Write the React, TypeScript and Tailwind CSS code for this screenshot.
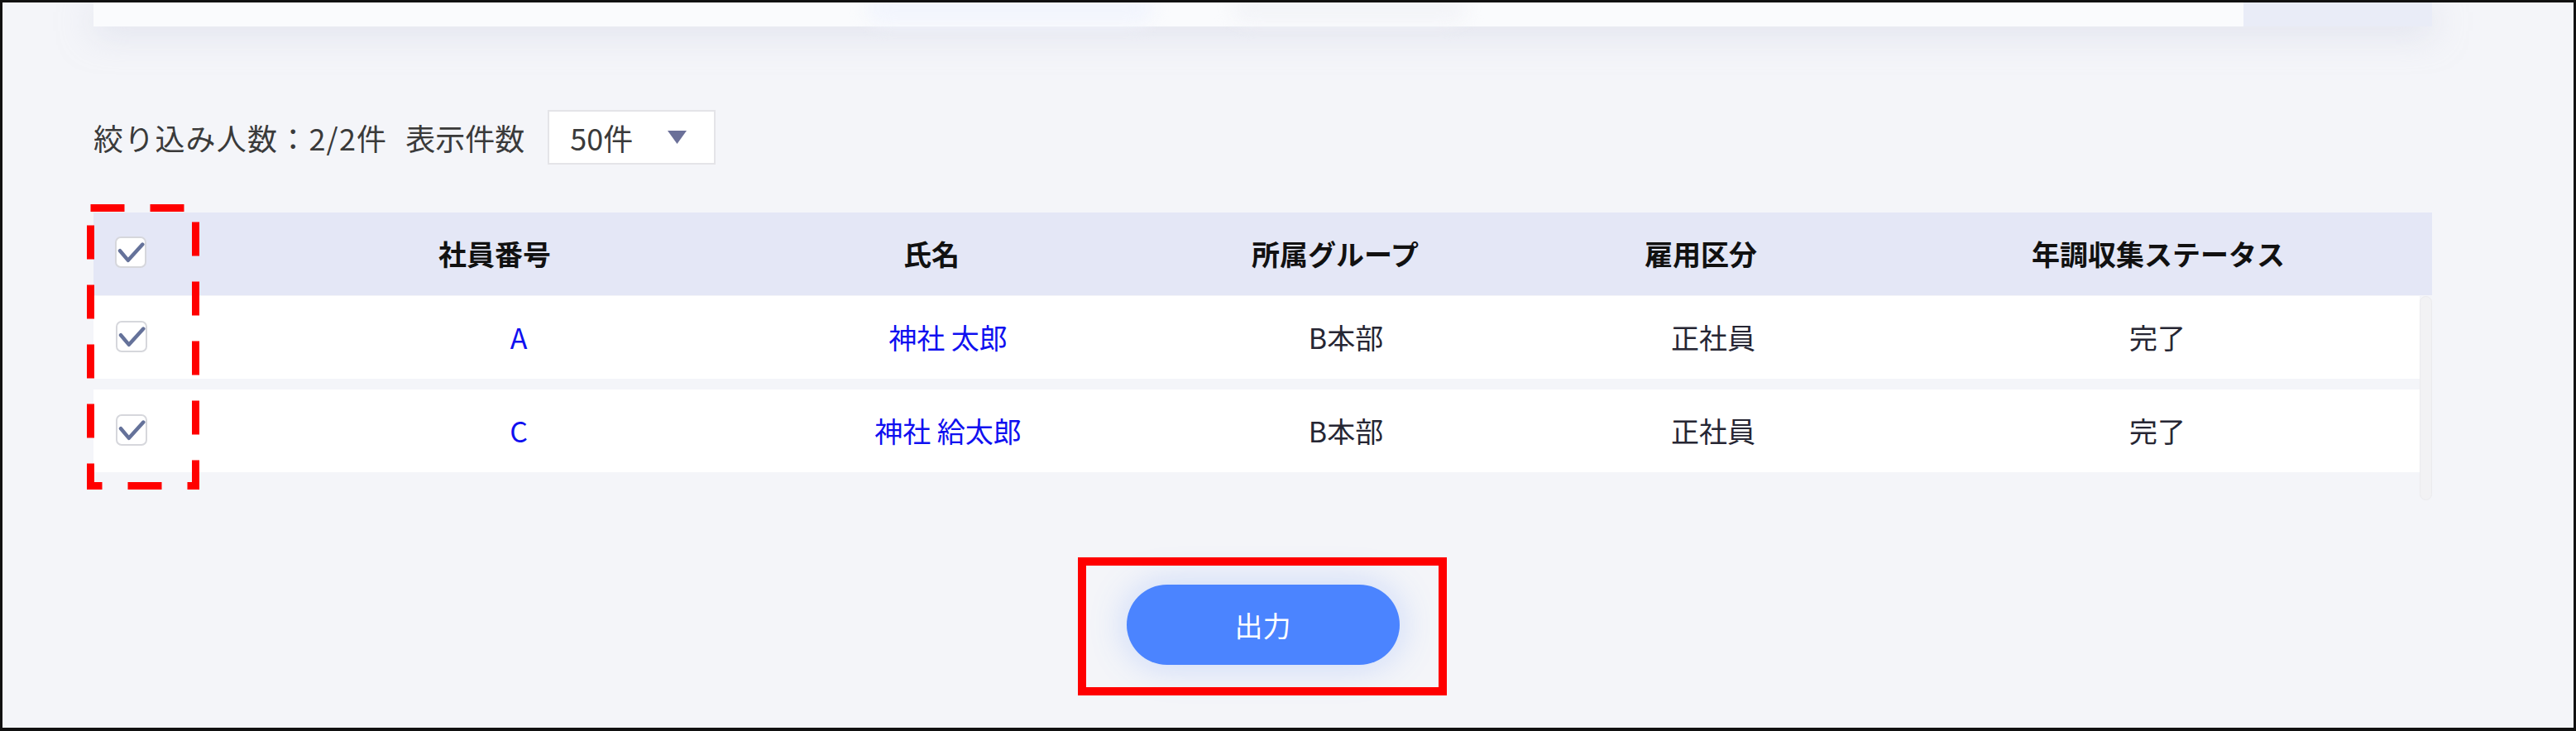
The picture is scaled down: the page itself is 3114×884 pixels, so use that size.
import React from "react";

function Check({ className = "" }: { className?: string }) {
  return (
    <div
      className={
        "w-[38px] h-[38px] rounded-[7px] border-2 border-[#d6d7dc] bg-white flex items-center justify-center " +
        className
      }
    >
      <svg width="38" height="38" viewBox="0 0 38 38" className="block">
        <polyline
          points="4.5,17 15.5,30 35,8.5"
          fill="none"
          stroke="#65729a"
          strokeWidth="5"
          strokeLinecap="round"
          strokeLinejoin="round"
        />
      </svg>
    </div>
  );
}

const rows = [
  { id: "A", name: "神社 太郎", group: "B本部", type: "正社員", status: "完了" },
  { id: "C", name: "神社 給太郎", group: "B本部", type: "正社員", status: "完了" },
];

export default function App() {
  return (
    <div className="relative w-[3114px] h-[884px] overflow-hidden bg-[#f4f5f9] font-['Noto_Sans_CJK_JP','Noto_Sans',sans-serif]">
      <div className="pl-[113px] pr-[174px]">
        {/* top card (cut off) */}
        <div className="relative flex h-[32px] shadow-[0_10px_40px_rgba(205,210,228,0.5)]">
          <div className="relative flex-1 bg-[#fafbfd]">
            <div className="absolute left-[934px] top-[-10px] w-[347px] h-[40px] rounded-full bg-[#f2f5fd] blur-[10px]" />
            <div className="absolute left-[1377px] top-[-10px] w-[282px] h-[38px] rounded-full bg-[#f3f4f8] blur-[10px]" />
          </div>
          <div className="w-[228px] bg-[#e9ecf7]" />
        </div>

        {/* filter row */}
        <div className="mt-[101px] h-[66px] flex items-center text-[36px] text-[#3a3a3a] leading-none">
          <span className="tracking-[1.2px]">絞り込み人数：2/2件</span>
          <span className="ml-[22px]">表示件数</span>
          <div className="ml-[28px] w-[203px] h-[66px] border-2 border-[#e4e4e8] bg-white flex items-center pl-[25px] pr-[33px] justify-between">
            <span>50件</span>
            <svg width="23" height="16" viewBox="0 0 23 16">
              <polygon points="0,0 23,0 11.5,16" fill="#6b7099" />
            </svg>
          </div>
        </div>

        {/* table header */}
        <div className="mt-[58px] h-[100px] bg-[#e4e7f6] grid grid-cols-[225px_520px_536px_440px_444px_662px] items-center text-[34px] font-bold text-[#111] leading-none">
          <div className="pl-[26px]">
            <Check className="-mt-[4px]" />
          </div>
          <div className="text-center">社員番号</div>
          <div className="text-center">氏名</div>
          <div className="text-center">所属グループ</div>
          <div className="text-center">雇用区分</div>
          <div className="text-center">年調収集ステータス</div>
        </div>

        {/* table body */}
        <div className="mt-[1px] h-[247px] flex">
          <div className="w-[2812px] flex flex-col gap-[13px]">
            {rows.map((r) => (
              <div
                key={r.id}
                className="h-[100px] bg-white grid grid-cols-[252px_524px_514px_448px_440px_634px] items-center text-[34px] text-[#262633] leading-none"
              >
                <div className="pl-[27px]">
                  <Check className="-mt-[3px]" />
                </div>
                <div className="text-center text-[#1010f0]">{r.id}</div>
                <div className="text-center text-[#1010f0]">{r.name}</div>
                <div className="text-center">{r.group}</div>
                <div className="text-center">{r.type}</div>
                <div className="text-center">{r.status}</div>
              </div>
            ))}
          </div>
          <div className="w-[15px] h-full rounded-full bg-[#f2f2f4] border border-[#ebebee]" />
        </div>

        {/* button */}
        <div className="mt-[102px] flex justify-center">
          <button className="w-[330px] h-[97px] rounded-full bg-[#4b84ff] text-white text-[34px] leading-none shadow-[0_0_45px_rgba(75,132,255,0.28)]">
            出力
          </button>
        </div>
      </div>

      {/* annotations */}
      <svg
        className="absolute left-0 top-0 pointer-events-none"
        width="3114"
        height="884"
        viewBox="0 0 3114 884"
      >
        <rect
          x="109.5"
          y="251.5"
          width="127"
          height="336"
          fill="none"
          stroke="#ff0000"
          strokeWidth="9"
          strokeDasharray="41 31"
        />
      </svg>
      <div className="absolute left-[1303px] top-[674px] w-[446px] h-[167px] border-[10px] border-[#ff0000] pointer-events-none" />
      <div className="absolute inset-0 border-[3px] border-b-[4px] border-[#111] pointer-events-none" />
    </div>
  );
}
